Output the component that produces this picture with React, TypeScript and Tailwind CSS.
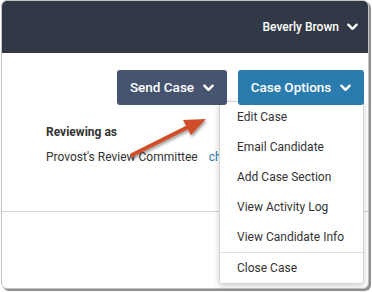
const Chevron = ({ className = "" }: { className?: string }) => (
  <svg viewBox="0 0 12 8" className={className} fill="none">
    <path d="M1.5 1.5 L6 6 L10.5 1.5" stroke="currentColor" strokeWidth="2.6" strokeLinecap="round" strokeLinejoin="round" />
  </svg>
);

const menuItems = ["Edit Case", "Email Candidate", "Add Case Section", "View Activity Log", "View Candidate Info"];

export default function App() {
  return (
    <div className="w-[372px] h-[292px] bg-white relative font-['Roboto',sans-serif]">
      <div className="w-[368px] h-[289px] ml-px rounded-[6px] border border-[#c4c4c4] shadow-[2px_2px_1px_rgba(0,0,0,0.45)] overflow-hidden bg-white">
        <header className="h-[52px] bg-[#313846] flex items-center justify-end pr-[10px] gap-[8px] text-white">
          <span className="text-[12px] font-medium">Beverly Brown</span>
          <Chevron className="w-[11px] h-[8px]" />
        </header>

        <div className="flex justify-end gap-[11px] pt-[17px] pr-[4px] relative z-10">
          <button className="h-[35px] w-[110px] rounded-[3px] bg-[#46546f] text-white text-[13.5px] font-medium flex items-center justify-center gap-[9px]">
            Send Case <Chevron className="w-[11px] h-[8px]" />
          </button>
          <button className="h-[35px] w-[126px] rounded-[3px] bg-[#2a7bae] text-white text-[13.5px] font-medium flex items-center justify-center gap-[9px]">
            Case Options <Chevron className="w-[11px] h-[8px]" />
          </button>
        </div>

        <div className="pl-[44px] pt-[18px] text-[12px] text-[#333]">
          <p className="font-bold leading-[18px]">Reviewing as</p>
          <p className="mt-[7px] leading-[18px] w-[174px] overflow-hidden whitespace-nowrap">
            Provost's Review Committee <span className="ml-[8px] text-[#2a7bae]">change</span>
          </p>
        </div>

        <div className="mt-[45px] border-t border-[#d6d6d6]" />
      </div>

      <div className="absolute left-[219px] top-[101px] w-[145px] bg-white border border-[#d4d4d4] rounded-[3px] shadow-[0_2px_6px_rgba(0,0,0,0.2)] text-[12px] text-[#333]">
        {menuItems.map((m) => (
          <div key={m} className="h-[30px] flex items-center pl-[17px]">{m}</div>
        ))}
        <div className="border-t border-[#e2e2e2]" />
        <div className="h-[30px] flex items-center pl-[17px]">Close Case</div>
      </div>

      <svg className="absolute left-0 top-0 w-[372px] h-[292px] pointer-events-none" viewBox="0 0 372 292">
        <defs>
          <filter id="sh" x="-20%" y="-20%" width="140%" height="140%">
            <feDropShadow dx="1" dy="2" stdDeviation="1.5" floodColor="#000" floodOpacity="0.4" />
          </filter>
        </defs>
        <g filter="url(#sh)" fill="#d0502a">
          <path d="M132 155 L188 127" stroke="#d0502a" strokeWidth="4" strokeLinecap="round" />
          <polygon points="206,119 183,120 191,135" />
        </g>
      </svg>
    </div>
  );
}
